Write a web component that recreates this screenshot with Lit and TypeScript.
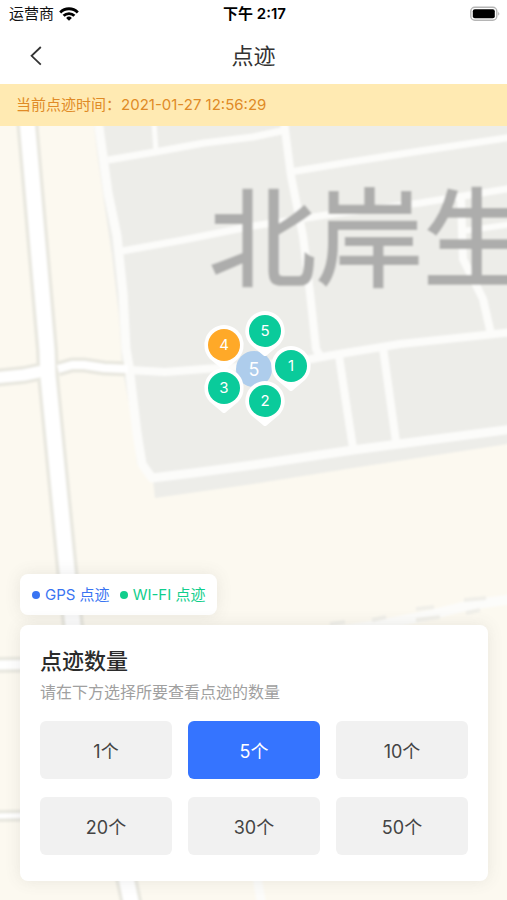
import { LitElement, html, css, svg } from "lit";
import { customElement, state } from "lit/decorators.js";
import { classMap } from "lit/directives/class-map.js";

interface Pin {
  label: string;
  x: number;
  y: number;
  kind: "wifi" | "current";
}

// Pin centres on the map canvas.
const PINS: Pin[] = [
  { label: "5", x: 265, y: 205, kind: "wifi" },
  { label: "4", x: 224, y: 219, kind: "current" },
  { label: "1", x: 291, y: 240, kind: "wifi" },
  { label: "3", x: 224, y: 262, kind: "wifi" },
  { label: "2", x: 265, y: 275, kind: "wifi" },
];

const COUNTS = [1, 5, 10, 20, 30, 50];

const MAIN_ROADS = [
  { d: "M27-6 L47 224 L48 250 L67 444 L73 500 L132 780", width: 15 },
  { d: "M-6 252 L24 249 L48 244", width: 11 },
  { d: "M58 243 L72 239 L84 239 L104 242 L128 243", width: 8 },
  { d: "M-6 539 L60 538", width: 9 },
  { d: "M-6 690 L60 689", width: 5 },
];

const STREETS = [
  { d: "M98-6 L101 16 L108 67 L117 110 L123 167 L126 223 L129 240 L133 274 L137 307 L142 338 L152 352 L193 347 L253 339 L353 324 L513 303", width: 9 },
  { d: "M108 34 L155 26 L204 17 L253 11 L286 4", width: 7 },
  { d: "M154-4 L156 26", width: 5 },
  { d: "M284-4 L291 50 L303 110 L310 167 L316 223 L320 230", width: 8 },
  { d: "M290 46 L350 36 L420 25 L513 11", width: 7 },
  { d: "M122 125 L183 114 L253 100 L333 88 L420 77 L513 62", width: 7 },
  { d: "M461 72 L463 133 L483 173 L491 208", width: 8 },
  { d: "M463 105 L513 98", width: 6 },
  { d: "M129 244 L165 246 L204 243 L254 240 L300 235 L333 229 L400 218 L513 206", width: 8 },
  { d: "M339 230 L345 270 L353 322", width: 8 },
  { d: "M383 222 L389 265 L396 316", width: 8 },
  { d: "M320 508 L390 497 L430 489 L470 479 L513 473", width: 10 },
  { d: "M255 740 L262 780", width: 9 },
];

// Broken edge of the lane at the lower right.
const LANE_EDGE = "M330 498 L345 496 M372 494 L386 491 M416 483 L434 481 M464 474 L486 472 M416 494 L440 491 M466 487 L480 484";

@customElement("map-backdrop")
class MapBackdrop extends LitElement {
  static styles = css`
    :host { display: block; overflow: hidden; background: #fcf9f0; }
    .canvas { display: block; width: 100%; height: 100%; }
    .district { fill: #edede9; }
    .casing { fill: none; stroke: #e9e8e0; stroke-linejoin: round; }
    .street { fill: none; stroke: #fcfcfa; stroke-linejoin: round; }
    .road { fill: none; stroke: #ffffff; stroke-linejoin: round; }
    .edge { fill: none; stroke: #f0efe9; stroke-width: 4; }
    .place {
      font: 400 107px "Noto Sans CJK SC", sans-serif;
      fill: #adadac;
      stroke: #adadac;
      stroke-width: 2px;
    }
  `;

  render() {
    return html`
      <svg class="canvas" viewBox="0 0 507 774" preserveAspectRatio="xMinYMin slice" aria-hidden="true">
        <defs>
          <filter id="soft" x="-5%" y="-5%" width="110%" height="110%"><feGaussianBlur stdDeviation="1.3" /></filter>
        </defs>
        <g filter="url(#soft)">
          <path class="district" d="M93-8 L98 34 L112 130 L119 190 L122 240 L134 305 L137 338 L153 354 L155 372 L253 358 L353 342 L515 317 V-8 Z" />
          ${MAIN_ROADS.map((r) => svg`<path class="casing" d=${r.d} stroke-width=${r.width + 7} />`)}
          ${STREETS.map((r) => svg`<path class="street" d=${r.d} stroke-width=${r.width} />`)}
          ${MAIN_ROADS.map((r) => svg`<path class="road" d=${r.d} stroke-width=${r.width} />`)}
          <path class="edge" d=${LANE_EDGE} />
          <text class="place" x="209" y="152">北岸生</text>
        </g>
      </svg>
    `;
  }
}

@customElement("app-root")
class AppRoot extends LitElement {
  static styles = css`
    :host {
      display: flex;
      flex-direction: column;
      min-height: 100vh;
      background: #ffffff;
      color: #333333;
      font-family: Inter, "Noto Sans CJK SC", sans-serif;
    }
    * { box-sizing: border-box; }
    button { font-family: inherit; border: 0; padding: 0; cursor: pointer; }
    .status, .nav {
      display: grid;
      grid-template-columns: 1fr auto 1fr;
      align-items: center;
    }
    .status {
      height: 28px;
      padding: 0 7px 0 9px;
      font-size: 15px;
      line-height: 20px;
      color: #111111;
    }
    .carrier { display: flex; align-items: center; gap: 5px; }
    .clock { font-size: 15px; font-weight: 600; color: #000000; }
    .battery { justify-self: end; display: block; }
    .wifi { display: block; }
    .nav { height: 56px; padding: 0 20px; }
    .back {
      display: flex;
      align-items: center;
      justify-content: center;
      width: 32px;
      height: 32px;
      background: none;
    }
    .title { margin: 0; font-size: 22px; line-height: 32px; font-weight: 400; }
    .notice {
      margin: 0;
      padding: 0 16px;
      background: #ffeab2;
      color: #e08a26;
      font-size: 15px;
      line-height: 42px;
    }
    .map {
      position: relative;
      flex: 1;
      display: flex;
      flex-direction: column;
      justify-content: flex-end;
      align-items: flex-start;
      gap: 10px;
      padding: 440px 19px 19px 20px;
      overflow: hidden;
    }
    .backdrop { position: absolute; inset: 0; }
    .cluster, .pin { position: absolute; transform: translate(-50%, -50%); color: #ffffff; }
    .cluster {
      width: 36px;
      height: 36px;
      border-radius: 50%;
      background: #aecdec;
      font-size: 18px;
    }
    .pin { width: 40px; height: 52px; background: none; }
    .shape { display: block; }
    .halo { fill: #ffffff; }
    .disc { fill: #0acb9b; }
    .current .disc { fill: #ffa928; }
    .number { font-size: 15px; fill: #ffffff; text-anchor: middle; }
    .legend, .card {
      position: relative;
      background: #ffffff;
      border-radius: 8px;
      box-shadow: 0 0 16px rgba(90, 90, 90, 0.12);
    }
    .legend {
      display: flex;
      gap: 10px;
      margin: 0;
      padding: 0 12px;
      list-style: none;
      font-size: 15px;
      line-height: 41px;
    }
    .key { display: flex; align-items: center; gap: 5px; }
    .key::before {
      content: "";
      width: 8px;
      height: 8px;
      border-radius: 50%;
      background: currentColor;
    }
    .gps { color: #3974f2; }
    .wifi-key { color: #10ce8c; }
    .card { align-self: stretch; padding: 20px 20px 26px; }
    .heading { margin: 0; font-size: 22px; line-height: 32px; font-weight: 500; color: #2b2b2b; }
    .hint { margin: 0 0 14px; font-size: 16px; line-height: 30px; color: #a0a0a0; }
    .counts { display: grid; grid-template-columns: repeat(3, 1fr); gap: 18px 16px; }
    .count {
      height: 58px;
      border-radius: 6px;
      background: #f1f1f1;
      color: #444444;
      font-size: 18px;
    }
    .selected { background: #3574ff; color: #ffffff; }
  `;

  @state() private count = 5;

  private renderPin(pin: Pin) {
    return html`
      <button
        class=${classMap({ pin: true, current: pin.kind === "current" })}
        style="left:${pin.x}px;top:${pin.y}px"
      >
        <svg class="shape" width="40" height="52" viewBox="0 0 40 52" overflow="visible">
          <path class="halo" d="M20 6 A20 20 0 0 1 34 40 L21.5 50.4 Q20 51.4 18.5 50.4 L6 40 A20 20 0 0 1 20 6 Z" />
          <circle class="disc" cx="20" cy="26" r="16" />
          <text class="number" x="20" y="31">${pin.label}</text>
        </svg>
      </button>
    `;
  }

  render() {
    return html`
      <div class="status">
        <span class="carrier">
          运营商
          <svg class="wifi" width="20" height="14" viewBox="0 0 20 14" fill="none" stroke="#000" stroke-width="2.8" aria-hidden="true">
            <path d="M1.2 5.4 A12.4 12.4 0 0 1 18.8 5.4" />
            <path d="M4.6 8.8 A7.6 7.6 0 0 1 15.4 8.8" />
            <path d="M10 13.8 L7.1 10.9 A4.2 4.2 0 0 1 12.9 10.9 Z" fill="#000" stroke="none" />
          </svg>
        </span>
        <span class="clock">下午 2:17</span>
        <svg class="battery" width="30" height="16" viewBox="0 0 30 16" aria-hidden="true">
          <rect x="0.8" y="1.2" width="26" height="13" rx="4" fill="#fff" stroke="#b5b5b5" stroke-width="1.4" />
          <rect x="2.8" y="3.2" width="22" height="9" rx="2" fill="#000" />
          <path d="M28.4 5.6 Q30 7.7 28.4 9.8 Z" fill="#999" />
        </svg>
      </div>
      <header class="nav">
        <button class="back" aria-label="返回">
          <svg width="12" height="20" viewBox="0 0 12 20" fill="none" stroke="#333" stroke-width="1.8" aria-hidden="true">
            <path d="M10.8 1 L1.6 9.8 L10.8 18.6" />
          </svg>
        </button>
        <h1 class="title">点迹</h1>
      </header>
      <p class="notice">当前点迹时间：<time>2021-01-27 12:56:29</time></p>
      <main class="map">
        <map-backdrop class="backdrop"></map-backdrop>
        <button class="cluster" style="left:254px;top:243px">5</button>
        ${PINS.map((pin) => this.renderPin(pin))}
        <ul class="legend">
          <li class="key gps">GPS 点迹</li>
          <li class="key wifi-key">WI-FI 点迹</li>
        </ul>
        <section class="card">
          <h2 class="heading">点迹数量</h2>
          <p class="hint">请在下方选择所要查看点迹的数量</p>
          <div class="counts">
            ${COUNTS.map(
              (n) => html`
                <button
                  class=${classMap({ count: true, selected: n === this.count })}
                  aria-pressed=${n === this.count ? "true" : "false"}
                  @click=${() => (this.count = n)}
                >${n}个</button>
              `
            )}
          </div>
        </section>
      </main>
    `;
  }
}
